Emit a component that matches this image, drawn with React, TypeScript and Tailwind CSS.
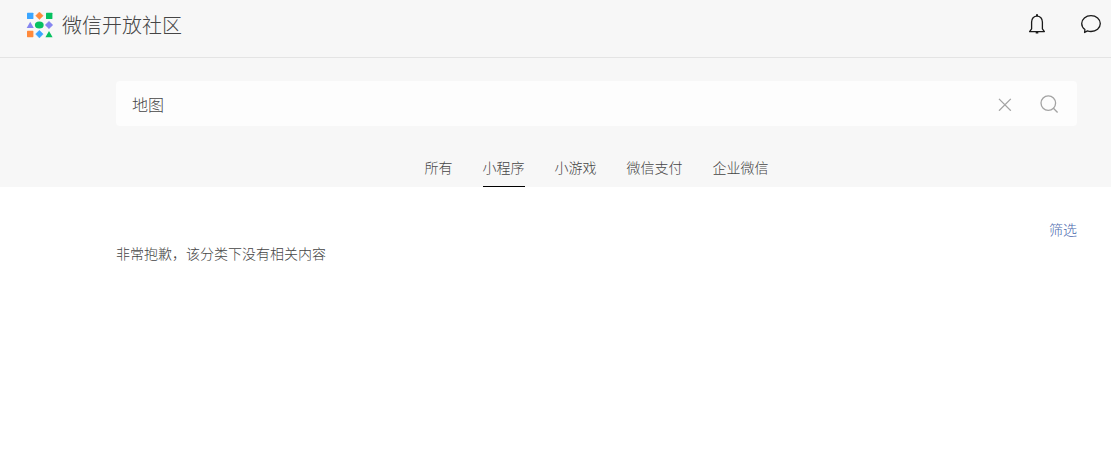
import { useState } from "react";

const tabs = ["所有", "小程序", "小游戏", "微信支付", "企业微信"];

function Logo() {
  return (
    <svg width="28" height="26" viewBox="0 0 28 26" aria-hidden="true">
      <rect x="1" y="0.7" width="6.4" height="6.4" rx="0.6" fill="#3aa5ff" />
      <path d="M13.4 0 17.2 3.8 13.4 7.6 9.6 3.8Z" fill="#ff8a3c" stroke="#ff8a3c" strokeWidth="0.4" />
      <rect x="20" y="0.7" width="6.4" height="6.4" rx="0.6" fill="#07c160" />
      <path d="M4.2 9.8 7.8 16H.7Z" fill="#8585f0" />
      <ellipse cx="13.3" cy="13" rx="4.4" ry="3.6" fill="#07c160" />
      <path d="M23 9.2 26.8 13 23 16.8 19.2 13Z" fill="#8585f0" stroke="#8585f0" strokeWidth="0.4" />
      <rect x="1" y="18.800" width="6.4" height="6.400" rx="0.6" fill="#ff8a3c" />
      <path d="M13.4 18.3 17.2 22.1 13.4 25.9 9.6 22.1Z" fill="#3aa5ff" stroke="#3aa5ff" strokeWidth="0.4" />
      <path d="M23 19 26.6 25.200H19.4Z" fill="#07c160" />
    </svg>
  );
}

function BellIcon() {
  return (
    <svg width="18" height="20" viewBox="0 0 18 20" fill="none" stroke="#1a1a1a" strokeWidth="1.3" aria-hidden="true">
      <path d="M1.6 17.6H16.4L14.4 14.8V8C14.4 4.6 12.2 2.1 9 2.1S3.6 4.6 3.6 8V14.8Z" strokeLinejoin="round" />
      <path d="M8 1.1h2M7.7 18.8h2.6" strokeWidth="1.6" />
    </svg>
  );
}

function ChatIcon() {
  return (
    <svg width="22" height="20" viewBox="0 0 22 20" fill="none" stroke="#1a1a1a" strokeWidth="1.3" aria-hidden="true">
      <path
        d="M11 1.7c5.2 0 9.3 3.5 9.3 7.9s-4.1 7.9-9.3 7.9c-1.3 0-2.5-.2-3.6-.6L4.600 18.5 4.900 15.600C2.900 14.100 1.700 12 1.700 9.600 1.700 5.200 5.800 1.700 11 1.700Z"
        strokeLinejoin="round"
      />
    </svg>
  );
}

export default function App() {
  const [query, setQuery] = useState("地图");
  const [active, setActive] = useState("小程序");

  return (
    <div className="min-h-screen bg-white font-['Noto_Sans_CJK_SC',sans-serif] text-sm font-light text-[#454545]">
      <header className="flex h-[58px] items-start justify-between border-b border-[#e4e4e4] bg-[#f7f7f7] pr-[9px] pl-[26px]">
        <a href="#" className="flex h-[50px] items-center gap-2 text-xl">
          <Logo />
          <h1>微信开放社区</h1>
        </a>
        <div className="flex h-12 items-center gap-8">
          <button type="button" aria-label="通知" className="pr-0.5">
            <BellIcon />
          </button>
          <button type="button" aria-label="消息">
            <ChatIcon />
          </button>
        </div>
      </header>

      <section className="bg-[#f7f7f7] pt-[23px] pr-[34px] pl-[116px]">
        <form
          role="search"
          onSubmit={(e) => e.preventDefault()}
          className="flex h-[45px] items-center rounded bg-[#fdfdfd] pr-[17px] pl-4"
        >
          <input
            type="text"
            aria-label="搜索"
            value={query}
            onChange={(e) => setQuery(e.target.value)}
            className="min-w-0 flex-1 bg-transparent text-base outline-none"
          />
          <button type="button" aria-label="清除" onClick={() => setQuery("")}>
            <svg width="14" height="14" viewBox="0 0 14 14" fill="none" stroke="#a3a3a3" strokeWidth="1.3" aria-hidden="true">
              <path d="M1 1.9 12.800 13.700M12.800 1.900 1 13.700" />
            </svg>
          </button>
          <button type="submit" aria-label="搜索" className="ml-7">
            <svg width="20" height="20" viewBox="0 0 20 20" fill="none" stroke="#a3a3a3" strokeWidth="1.3" aria-hidden="true">
              <circle cx="8.3" cy="9.1" r="7.3" />
              <path d="M13.4 14.300 17.600 18.500" />
            </svg>
          </button>
        </form>

        <nav className="mt-6 flex justify-center gap-[30px]">
          {tabs.map((tab) => (
            <button
              key={tab}
              type="button"
              onClick={() => setActive(tab)}
              className={
                tab === active
                  ? "h-[37px] border-b border-black pb-0.5"
                  : "h-[37px] border-b border-transparent pb-0.5"
              }
            >
              {tab}
            </button>
          ))}
        </nav>
      </section>

      <main className="pt-8 pr-[34px] pl-[116px]">
        <div className="flex justify-end">
          <button type="button" className="text-[#4a67ad]">
            筛选
          </button>
        </div>
        <p className="mt-1">非常抱歉，该分类下没有相关内容</p>
      </main>
    </div>
  );
}
